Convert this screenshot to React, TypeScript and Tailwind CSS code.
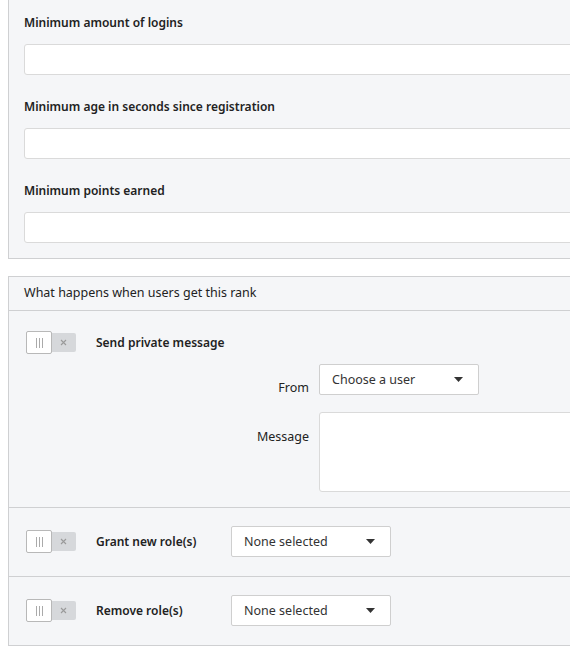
import React from "react";

function Toggle() {
  return (
    <div className="flex items-center w-[50px] h-[23px] shrink-0">
      <div className="relative z-10 w-[26px] h-[23px] bg-white border border-[#b8b8b8] rounded-[2px] flex items-center justify-center gap-[2px]">
        <span className="block w-px h-[10px] bg-[#aaa]" />
        <span className="block w-px h-[10px] bg-[#aaa]" />
        <span className="block w-px h-[10px] bg-[#aaa]" />
      </div>
      <div className="-ml-px w-[25px] h-[19px] bg-[#d6d8db] rounded-r-[2px] flex items-center justify-center">
        <svg width="7" height="7" viewBox="0 0 7 7">
          <path d="M1 1L6 6M6 1L1 6" stroke="#9a9a9a" strokeWidth="1.1" />
        </svg>
      </div>
    </div>
  );
}

function Select({ text }: { text: string }) {
  return (
    <div className="w-[160px] h-[31px] bg-white border border-[#cfcfcf] rounded-[2px] flex items-center justify-between pl-[12px] pr-[15px] text-[12.5px] text-[#333]">
      <span className="pt-[2px]">{text}</span>
      <svg width="9" height="5" viewBox="0 0 9 5">
        <path d="M0 0H9L4.5 5Z" fill="#333" />
      </svg>
    </div>
  );
}

function Field({ label, first }: { label: string; first?: boolean }) {
  return (
    <div className={first ? "" : "mt-[23px]"}>
      <div className="text-[12px] font-semibold leading-[18px] text-[#222]">{label}</div>
      <div className="mt-[12px] h-[31px] bg-white border border-[#dadada] rounded-[3px]" />
    </div>
  );
}

export default function App() {
  return (
    <div className="w-[570px] h-[658px] overflow-hidden bg-white font-['Noto_Sans',sans-serif] text-[12.5px] text-[#222]">
      <div className="ml-2 w-[620px] border-l border-b border-[#cfd0d2] bg-[#f5f6f8] pl-[15px] pt-[14px] pb-[15px]">
        <Field label="Minimum amount of logins" first />
        <Field label="Minimum age in seconds since registration" />
        <Field label="Minimum points earned" />
      </div>

      <div className="ml-2 mt-[17px] w-[620px] border-l border-t border-b border-[#cfd0d2] bg-[#f5f6f8]">
        <div className="h-[34px] flex items-center pl-[15px] border-b border-[#cfd0d2] text-[#222]">
          What happens when users get this rank
        </div>

        <div className="border-b border-[#cfd0d2] pt-[20px] pb-[15px]">
          <div className="flex items-center pl-[17px]">
            <Toggle />
            <div className="ml-[20px] text-[12px] font-semibold">Send private message</div>
          </div>
          <div className="mt-[10px] flex items-start">
            <div className="w-[300px] h-[31px] text-right pt-[16px] leading-[15px]">From</div>
            <div className="ml-[10px]">
              <Select text="Choose a user" />
            </div>
          </div>
          <div className="mt-[17px] flex items-start">
            <div className="w-[300px] text-right pt-[16px] leading-[18px]">Message</div>
            <div className="ml-[10px] w-[300px] h-[80px] bg-white border border-[#dadada] rounded-[3px]" />
          </div>
        </div>

        <div className="border-b border-[#cfd0d2] pt-[18px] pb-[19px] flex items-center pl-[17px]">
          <Toggle />
          <div className="ml-[20px] w-[135px] text-[12px] font-semibold">Grant new role(s)</div>
          <Select text="None selected" />
        </div>

        <div className="pt-[18px] pb-[19px] flex items-center pl-[17px]">
          <Toggle />
          <div className="ml-[20px] w-[135px] text-[12px] font-semibold">Remove role(s)</div>
          <Select text="None selected" />
        </div>
      </div>
    </div>
  );
}
